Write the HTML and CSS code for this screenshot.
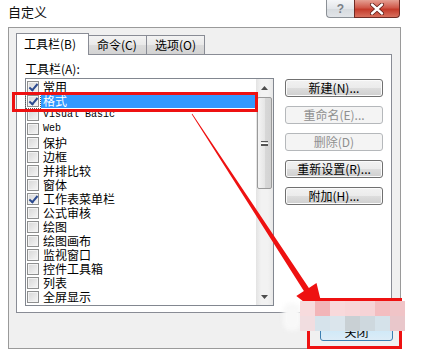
FILE: index.html
```html
<!DOCTYPE html>
<html lang="zh-CN">
<head>
<meta charset="utf-8">
<title>自定义</title>
<link rel="stylesheet" href="styles.css">
</head>
<body>
<div class="titlebar">
  <div class="title">自定义</div>
  <div class="caption">
    <div class="help">?</div>
    <div class="close">
      <svg width="16" height="12" viewBox="0 0 16 12"><path d="M3 1.5 L13 10.5 M13 1.5 L3 10.5" stroke="#5a1a14" stroke-width="4" stroke-linecap="round"/><path d="M3 1.5 L13 10.5 M13 1.5 L3 10.5" stroke="#fff" stroke-width="2.4" stroke-linecap="round"/></svg>
    </div>
  </div>
</div>

<div class="dialog">
  <div class="tabs">
    <div class="tab active">工具栏(B)</div>
    <div class="tab">命令(C)</div>
    <div class="tab">选项(O)</div>
  </div>
  <div class="panel">
    <div class="left">
      <div class="label">工具栏(A):</div>
      <div class="listbox">
        <div class="list">
          <div class="row"><span class="cb on"></span><span class="txt">常用</span></div>
          <div class="row sel"><span class="cb on"></span><span class="txt">格式</span></div>
          <div class="row"><span class="cb"></span><span class="txt lat">Visual Basic</span></div>
          <div class="row"><span class="cb"></span><span class="txt lat">Web</span></div>
          <div class="row"><span class="cb"></span><span class="txt">保护</span></div>
          <div class="row"><span class="cb"></span><span class="txt">边框</span></div>
          <div class="row"><span class="cb"></span><span class="txt">并排比较</span></div>
          <div class="row"><span class="cb"></span><span class="txt">窗体</span></div>
          <div class="row"><span class="cb on"></span><span class="txt">工作表菜单栏</span></div>
          <div class="row"><span class="cb"></span><span class="txt">公式审核</span></div>
          <div class="row"><span class="cb"></span><span class="txt">绘图</span></div>
          <div class="row"><span class="cb"></span><span class="txt">绘图画布</span></div>
          <div class="row"><span class="cb"></span><span class="txt">监视窗口</span></div>
          <div class="row"><span class="cb"></span><span class="txt">控件工具箱</span></div>
          <div class="row"><span class="cb"></span><span class="txt">列表</span></div>
          <div class="row"><span class="cb"></span><span class="txt">全屏显示</span></div>
        </div>
        <div class="sb">
          <div class="sb-btn"><svg width="7" height="4" viewBox="0 0 7 4"><path d="M0 4 L3.5 0 L7 4 Z" fill="#4d4d4d"/></svg></div>
          <div class="thumb"><span class="grip"></span></div>
          <div class="track"></div>
          <div class="sb-btn"><svg width="7" height="4" viewBox="0 0 7 4"><path d="M0 0 L3.5 4 L7 0 Z" fill="#4d4d4d"/></svg></div>
        </div>
      </div>
    </div>
    <div class="right">
      <div class="btn">新建(N)...</div>
      <div class="btn dis">重命名(E)...</div>
      <div class="btn dis">删除(D)</div>
      <div class="btn">重新设置(R)...</div>
      <div class="btn">附加(H)...</div>
    </div>
  </div>
  <div class="footer">
    <div class="okbtn">关闭</div>
  </div>
</div>

<div class="mark mark1"></div>
<svg class="arrow" width="433" height="359" viewBox="0 0 433 359">
  <polygon points="192.3,113.8 191.7,114.2 303.9,291.1 296.3,296 325,318 316.5,283 308.9,287.9" fill="#ee1111"/>
</svg>
<div class="mark mark2"></div>
<div class="smudge"></div>
<div class="mosaic">
  <div class="m1"></div><div class="m2"></div><div class="m3"></div><div class="m4"></div><div class="m5"></div><div class="m6"></div><div class="m7"></div>
  <div class="m8"></div><div class="m9"></div><div class="m10"></div><div class="m11"></div><div class="m12"></div><div class="m13"></div><div class="m14"></div>
</div>
</body>
</html>
```

FILE: styles.css
```css
html, body {
  margin: 0;
  padding: 0;
}
body {
  width: 433px;
  height: 359px;
  position: relative;
  overflow: hidden;
  background: #ffffff;
  color: #000;
  font-family: "Noto Sans CJK SC", "Liberation Sans", sans-serif;
  font-size: 12px;
  line-height: 14px;
}

/* title bar */
.titlebar {
  display: flex;
  width: 400px;
  height: 27px;
}
.title {
  padding: 4px 0 0 8px;
  font-size: 13px;
  line-height: 16px;
  color: #111;
}
.caption {
  margin-left: auto;
  display: flex;
  height: 18px;
}
.help {
  box-sizing: border-box;
  width: 28px;
  height: 18px;
  border: 1px solid #8b9096;
  border-top: none;
  border-right: none;
  border-radius: 0 0 0 4px;
  background: linear-gradient(#f5f6f8, #e3e6ea 50%, #d6dade 51%, #e2e5e9);
  display: flex;
  align-items: center;
  justify-content: center;
  color: #7a8088;
  font-family: "Liberation Sans", sans-serif;
  font-size: 12px;
  font-weight: bold;
}
.close {
  box-sizing: border-box;
  width: 46px;
  height: 18px;
  border: 1px solid #6f2b24;
  border-top: none;
  border-radius: 0 0 4px 0;
  background: linear-gradient(#e5a093, #d0594a 45%, #c43b2b 55%, #d8705e);
  display: flex;
  align-items: center;
  justify-content: center;
}

/* dialog */
.dialog {
  box-sizing: border-box;
  margin-left: 8px;
  width: 393px;
  height: 322px;
  border: 1px solid #9a9a9a;
  background: #f0f0f0;
  padding: 5px 8px 0 7px;
}
.tabs {
  display: flex;
  align-items: flex-end;
  height: 21px;
}
.tab {
  box-sizing: border-box;
  height: 19px;
  width: 59px;
  margin-left: -1px;
  border: 1px solid #898c95;
  border-bottom: none;
  background: linear-gradient(#f3f3f3, #e9e9e9 50%, #dcdcdc 51%, #d3d3d3);
  padding-left: 8px;
  display: flex;
  align-items: center;
  font-size: 12px;
}
.tab.active {
  margin-left: 0;
  width: 73px;
  height: 22px;
  margin-bottom: -1px;
  position: relative;
  z-index: 1;
  background: #ffffff;
  padding-left: 7px;
  padding-bottom: 1px;
}
.panel {
  box-sizing: border-box;
  width: 376px;
  height: 259px;
  border: 1px solid #898c95;
  background: #ffffff;
  padding: 7px 8px 0 8px;
  display: flex;
  gap: 11px;
}
.label {
  height: 14px;
  margin-bottom: 2px;
  line-height: 14px;
}
.listbox {
  box-sizing: border-box;
  width: 249px;
  height: 228px;
  border: 1px solid #828790;
  display: flex;
}
.list {
  flex: 1;
  padding-top: 1px;
}
.row {
  height: 14px;
  display: flex;
  align-items: flex-start;
}
.cb {
  box-sizing: border-box;
  width: 12px;
  height: 12px;
  margin: 1px 0 0 1px;
  border: 1px solid #8e8f8f;
  background: linear-gradient(135deg, #d6d6d6, #f6f6f6);
  box-shadow: inset 0 0 0 1px #f3f3f3;
  position: relative;
}
.cb.on::after {
  content: "";
  position: absolute;
  left: 3px;
  top: 0px;
  width: 3px;
  height: 7px;
  border: solid #2b4a8f;
  border-width: 0 2px 2px 0;
  transform: rotate(40deg);
}
.txt {
  flex: 1;
  margin-left: 2px;
  padding-left: 2px;
  height: 14px;
  line-height: 14px;
  white-space: nowrap;
}
.lat {
  font-family: "Liberation Mono", monospace;
  font-size: 10px;
}
.row.sel .txt {
  background: #3399ff;
  color: #ffffff;
}
.row.sel .cb {
  outline: 1px dotted #555;
  outline-offset: 1px;
}

/* scrollbar */
.sb {
  width: 17px;
  display: flex;
  flex-direction: column;
  background: linear-gradient(90deg, #e3e3e3, #f2f2f2 30%, #f2f2f2 70%, #e8e8e8);
}
.sb-btn {
  height: 17px;
  display: flex;
  align-items: center;
  justify-content: center;
}
.thumb {
  box-sizing: border-box;
  height: 92px;
  margin: 1px 1px 0 1px;
  border: 1px solid #9a9a9a;
  border-radius: 2px;
  background: linear-gradient(90deg, #f4f4f4, #e6e6e6 50%, #d8d8d8 51%, #d2d2d2);
  display: flex;
  align-items: center;
  justify-content: center;
}
.grip {
  width: 7px;
  height: 5px;
  border-top: 1px solid #555;
  border-bottom: 1px solid #555;
  background: linear-gradient(#fff 0 1px, #555 1px 2px, transparent 2px) 0 1px / 100% 3px no-repeat;
  box-sizing: border-box;
}
.track {
  flex: 1;
}

/* right buttons */
.right {
  padding-top: 17px;
  display: flex;
  flex-direction: column;
  gap: 9px;
}
.btn {
  box-sizing: border-box;
  width: 98px;
  height: 18px;
  border: 1px solid #707070;
  border-radius: 3px;
  background: linear-gradient(#f2f2f2, #ebebeb 50%, #dddddd 51%, #cfcfcf);
  box-shadow: inset 0 0 0 1px #fbfbfb;
  display: flex;
  align-items: center;
  justify-content: center;
  white-space: nowrap;
}
.btn.dis {
  border-color: #b5b8bb;
  background: #f4f4f4;
  box-shadow: none;
  color: #8f8f8f;
}

/* footer */
.footer {
  display: flex;
  justify-content: flex-end;
  padding-top: 5px;
  margin-right: -1px;
}
.okbtn {
  box-sizing: border-box;
  width: 73px;
  height: 23px;
  border: 1px solid #3c7fb1;
  border-radius: 3px;
  background: linear-gradient(#eaf6fd, #d9f0fc 50%, #cfe9f8 51%, #dcecf7);
  display: flex;
  align-items: flex-end;
  justify-content: center;
  line-height: 16px;
}

/* annotations */
.mark {
  position: absolute;
  box-sizing: border-box;
  border: 3px solid #ee1111;
}
.mark1 {
  left: 12px;
  top: 92px;
  width: 246px;
  height: 20px;
}
.mark2 {
  left: 307px;
  top: 298px;
  width: 95px;
  height: 51px;
}
.arrow {
  position: absolute;
  left: 0;
  top: 0;
  pointer-events: none;
}
.smudge {
  position: absolute;
  left: 283px;
  top: 303px;
  width: 18px;
  height: 28px;
  border-radius: 8px;
  background: #f8f8f8;
  filter: blur(2px);
}
.mosaic {
  position: absolute;
  left: 300px;
  top: 301px;
  display: grid;
  grid-template-columns: repeat(7, 15px);
  grid-template-rows: repeat(2, 15px);
}
.m1 { background: #f7dbdd; }
.m2 { background: #f2b5b8; }
.m3 { background: #f8d9db; }
.m4 { background: #f7d6d8; }
.m5 { background: #f6d3d6; }
.m6 { background: #f3bdc0; }
.m7 { background: #f0c4c7; }
.m8 { background: #f1dde0; }
.m9 { background: #d6e3eb; }
.m10 { background: #dbe5ec; }
.m11 { background: #c9d0d4; }
.m12 { background: #ced8de; }
.m13 { background: #d5e2ea; }
.m14 { background: #e9c7cb; }
```
